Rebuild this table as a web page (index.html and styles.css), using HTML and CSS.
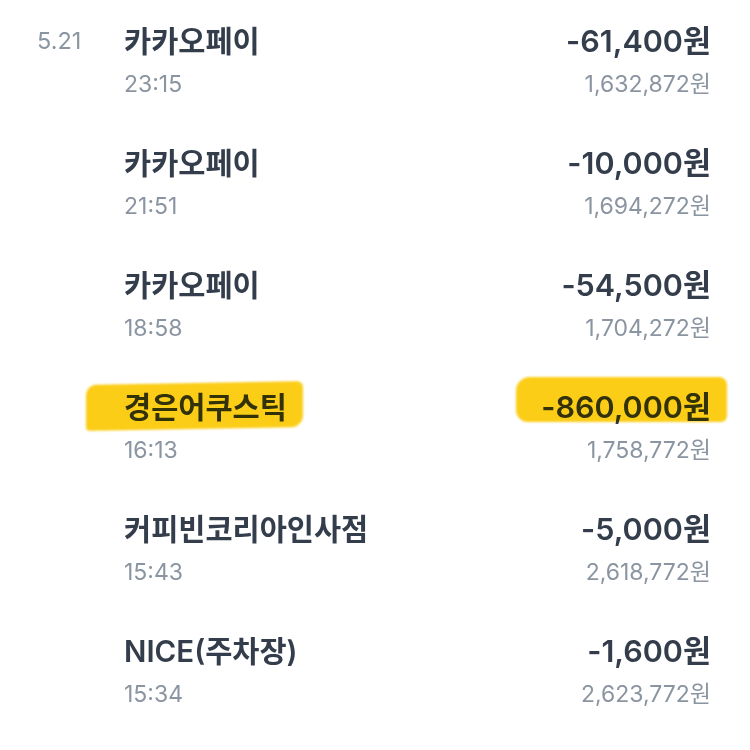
FILE: index.html
```html
<!DOCTYPE html>
<html lang="ko">
<head>
<meta charset="utf-8">
<link rel="stylesheet" href="styles.css">
</head>
<body>
<ul class="list">
  <li class="row">
    <div class="date">5.21</div>
    <div class="info"><div class="title">카카오페이</div><div class="sub">23:15</div></div>
    <div class="money"><div class="amount">-61,400원</div><div class="sub">1,632,872원</div></div>
  </li>
  <li class="row">
    <div class="date"></div>
    <div class="info"><div class="title">카카오페이</div><div class="sub">21:51</div></div>
    <div class="money"><div class="amount">-10,000원</div><div class="sub">1,694,272원</div></div>
  </li>
  <li class="row">
    <div class="date"></div>
    <div class="info"><div class="title">카카오페이</div><div class="sub">18:58</div></div>
    <div class="money"><div class="amount">-54,500원</div><div class="sub">1,704,272원</div></div>
  </li>
  <li class="row">
    <div class="date"></div>
    <div class="info"><div class="title marked"><span class="mark mark-left"></span>경은어쿠스틱</div><div class="sub">16:13</div></div>
    <div class="money"><div class="amount marked"><span class="mark mark-right"></span>-860,000원</div><div class="sub">1,758,772원</div></div>
  </li>
  <li class="row">
    <div class="date"></div>
    <div class="info"><div class="title">커피빈코리아인사점</div><div class="sub">15:43</div></div>
    <div class="money"><div class="amount">-5,000원</div><div class="sub">2,618,772원</div></div>
  </li>
  <li class="row">
    <div class="date"></div>
    <div class="info"><div class="title">NICE(주차장)</div><div class="sub">15:34</div></div>
    <div class="money"><div class="amount">-1,600원</div><div class="sub">2,623,772원</div></div>
  </li>
</ul>
</body>
</html>
```
FILE: styles.css
```css
html, body {
  margin: 0;
  padding: 0;
  background: #ffffff;
}
body {
  font-family: "Inter", "Noto Sans CJK KR", sans-serif;
  width: 750px;
  height: 750px;
  overflow: hidden;
}
.list {
  list-style: none;
  margin: 0;
  padding: 23px 39px 0 0;
}
.row {
  display: grid;
  grid-template-columns: 124px 1fr auto;
  padding-bottom: 47px;
}
.date {
  padding-left: 37px;
  font-size: 23.5px;
  line-height: 36px;
  color: #8b95a1;
}
.title, .amount {
  font-size: 29.5px;
  line-height: 36px;
  font-weight: 600;
  color: #333d4b;
}
.amount {
  font-size: 30.5px;
  text-align: right;
}
.sub {
  margin-top: 11px;
  font-size: 23px;
  line-height: 28px;
  color: #8b95a1;
}
.money .sub {
  text-align: right;
}
.marked {
  position: relative;
}
.mark {
  position: absolute;
  background: #fbcd17;
  mix-blend-mode: multiply;
  filter: blur(0.8px);
  pointer-events: none;
}
.mark-left {
  left: -38px;
  width: 217px;
  top: -6px;
  height: 46px;
  border-radius: 10px 6px 12px 4px;
  transform: skewY(-1deg);
}
.mark-right {
  right: -16px;
  width: 211px;
  top: -12px;
  height: 45px;
  border-radius: 14px 8px 6px 12px;
}
```
